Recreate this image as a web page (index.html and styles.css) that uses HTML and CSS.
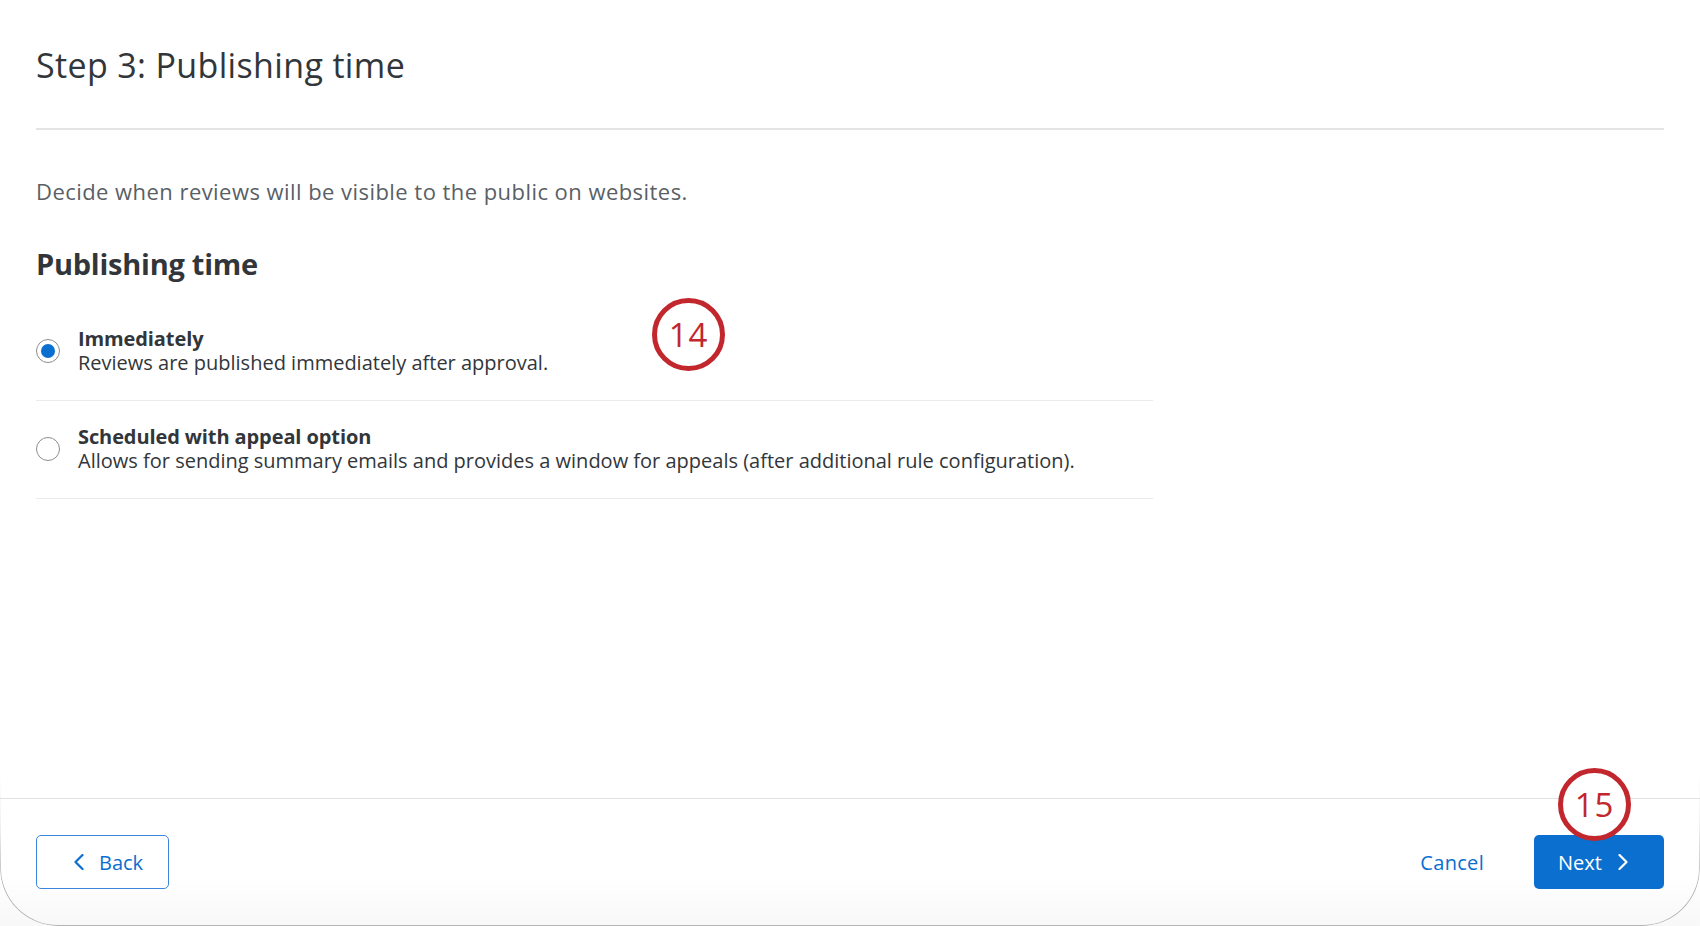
FILE: index.html
```html
<!DOCTYPE html>
<html lang="en">
<head>
<meta charset="utf-8">
<title>Step 3: Publishing time</title>
<link rel="stylesheet" href="styles.css">
</head>
<body>
<div class="page">
  <header class="header">
    <h1 class="title">Step 3: Publishing time</h1>
  </header>
  <main class="content">
    <p class="intro">Decide when reviews will be visible to the public on websites.</p>
    <h2 class="section-title">Publishing time</h2>
    <div class="options">
      <label class="option">
        <span class="radio checked"><span class="dot"></span></span>
        <span class="option-text">
          <span class="option-name">Immediately</span>
          <span class="option-desc">Reviews are published immediately after approval.</span>
        </span>
      </label>
      <label class="option">
        <span class="radio"></span>
        <span class="option-text">
          <span class="option-name">Scheduled with appeal option</span>
          <span class="option-desc">Allows for sending summary emails and provides a window for appeals (after additional rule configuration).</span>
        </span>
      </label>
    </div>
  </main>
  <footer class="footer">
    <button class="btn btn-back">
      <svg class="chev" width="10" height="16" viewBox="0 0 10 16"><polyline points="8.5,1 1.5,8 8.5,15" fill="none" stroke="currentColor" stroke-width="2.2" stroke-linecap="round" stroke-linejoin="round"/></svg>
      <span>Back</span>
    </button>
    <div class="footer-right">
      <button class="btn-link">Cancel</button>
      <button class="btn btn-next">
        <span>Next</span>
        <svg class="chev" width="10" height="16" viewBox="0 0 10 16"><polyline points="1.5,1 8.5,8 1.5,15" fill="none" stroke="currentColor" stroke-width="2.2" stroke-linecap="round" stroke-linejoin="round"/></svg>
      </button>
    </div>
  </footer>
  <div class="badge badge-14">14</div>
  <div class="badge badge-15">15</div>
</div>
</body>
</html>
```

FILE: styles.css
```css
* { box-sizing: border-box; }
html, body { margin: 0; padding: 0; background: #ffffff; }
body {
  font-family: "Open Sans", "Noto Sans", "Liberation Sans", sans-serif;
  color: #32363a;
}
.page {
  position: relative;
  width: 1700px;
  height: 926px;
  display: flex;
  flex-direction: column;
  overflow: hidden;
}
.page::after {
  content: "";
  position: absolute;
  left: 0;
  right: 0;
  bottom: 0;
  height: 150px;
  border: 1px solid #b4b4b4;
  border-top: none;
  border-radius: 0 0 58px 58px;
  pointer-events: none;
  -webkit-mask-image: linear-gradient(to bottom, transparent 0%, rgba(0,0,0,0.2) 35%, #000 75%);
  mask-image: linear-gradient(to bottom, transparent 0%, rgba(0,0,0,0.2) 35%, #000 75%);
}
.header {
  margin: 0 36px;
  padding-top: 42px;
  padding-bottom: 40px;
  border-bottom: 2px solid #e4e4e4;
}
.title {
  margin: 0;
  font-size: 34px;
  line-height: 46px;
  font-weight: 400;
  color: #32363a;
  letter-spacing: 0.35px;
}
.content {
  padding: 0 36px;
  flex: 1;
}
.intro {
  margin: 47px 0 0;
  font-size: 22px;
  line-height: 28px;
  color: #5a5f66;
  letter-spacing: 0.45px;
}
.section-title {
  margin: 41px 0 0;
  font-size: 29px;
  line-height: 36px;
  font-weight: 700;
  color: #32363a;
  letter-spacing: -0.25px;
}
.options {
  margin-top: 21px;
  width: 1117px;
}
.option {
  display: flex;
  align-items: center;
  gap: 18px;
  padding: 24px 0 25px;
  border-bottom: 1px solid #ebebeb;
}
.radio {
  width: 24px;
  height: 24px;
  border-radius: 50%;
  border: 1px solid #8d8d8d;
  background: #fff;
  display: flex;
  align-items: center;
  justify-content: center;
  flex: none;
}
.radio .dot {
  width: 14px;
  height: 14px;
  border-radius: 50%;
  background: #0b6fd0;
}
.option-text {
  display: flex;
  flex-direction: column;
}
.option-name {
  font-size: 20px;
  line-height: 24px;
  font-weight: 700;
  color: #32363a;
  letter-spacing: -0.1px;
}
.option-desc {
  font-size: 20px;
  line-height: 24px;
  color: #32363a;
  letter-spacing: 0;
}
.footer {
  border-top: 1px solid #e2e2e2;
  padding: 36px 36px 37px;
  display: flex;
  justify-content: space-between;
  align-items: center;
  background: linear-gradient(to bottom, #ffffff 60%, #f8f8f8 100%);
}
.footer-right {
  display: flex;
  align-items: center;
  gap: 50px;
}
.btn {
  height: 54px;
  border-radius: 5px;
  display: flex;
  align-items: center;
  font-family: inherit;
  font-size: 20px;
  cursor: pointer;
}
.btn-back {
  width: 133px;
  padding: 0 0 0 37px;
  gap: 15px;
  border: 1px solid #3b86dc;
  background: #fff;
  color: #0b6ed0;
}
.btn-next {
  width: 130px;
  padding: 0 0 0 24px;
  gap: 16px;
  border: none;
  background: #0b6fd0;
  color: #fff;
}
.btn-link {
  border: none;
  background: none;
  padding: 0;
  font-family: inherit;
  font-size: 20px;
  color: #0b6ed0;
  letter-spacing: 0.3px;
  cursor: pointer;
}
.chev { display: block; }
.badge {
  position: absolute;
  width: 73px;
  height: 73px;
  border-radius: 50%;
  border: 5px solid #c1272d;
  background: #fff;
  color: #c1272d;
  display: flex;
  align-items: center;
  justify-content: center;
  font-size: 33px;
  line-height: 1;
  font-weight: 400;
  letter-spacing: 1px;
}
.badge-14 { left: 652px; top: 298px; }
.badge-15 { left: 1558px; top: 768px; }
```
